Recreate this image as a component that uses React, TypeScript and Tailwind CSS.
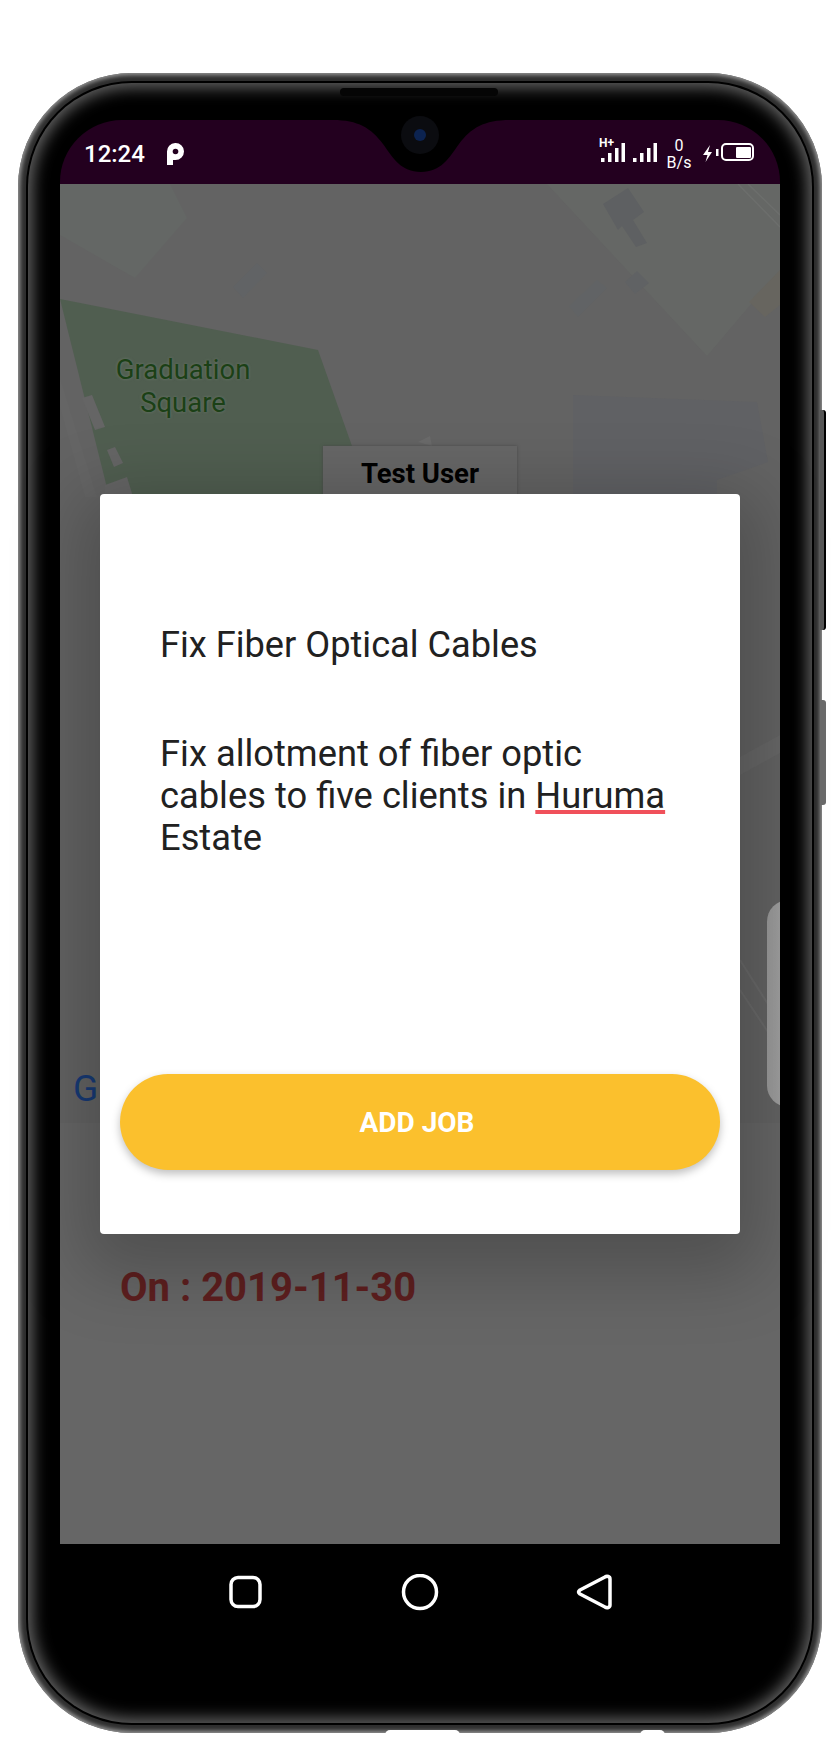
import React from 'react';

const roboto = { fontFamily: 'Roboto, sans-serif' };

function SignalBars() {
  return (
    <svg width="24" height="20" viewBox="0 0 24 20" fill="#fff">
      <rect x="0" y="15" width="3.5" height="4" />
      <rect x="7" y="10" width="3.5" height="9" />
      <rect x="14" y="5" width="3.5" height="14" />
      <rect x="20.5" y="0" width="3.5" height="19" />
    </svg>
  );
}

function StatusBar() {
  return (
    <div className="relative h-[64px] shrink-0 rounded-t-[62px] bg-[#23001f] text-white font-['Roboto',sans-serif]">
      {/* notch */}
      <svg className="absolute left-[273px] top-0" width="177" height="54" viewBox="0 0 177 54">
        <path d="M0 0 C25 0 38 8 50 24 C60 38 68 52 88 52 C108 52 116 38 126 24 C138 8 151 0 177 0 Z" fill="#000" />
      </svg>
      <div className="absolute left-[24px] top-0 flex h-[64px] items-center gap-[21px] pt-[4px]">
        <span className="text-[24px] leading-none font-medium">12:24</span>
        <svg width="19" height="22" viewBox="0 0 19 22">
          <path d="M1 22 V9 A8.5 8.5 0 1 1 9.5 17 H7 V22 Z" fill="#fff" />
          <circle cx="9.5" cy="8.5" r="2.8" fill="#23001f" />
        </svg>
      </div>
      <div className="absolute left-[541px] top-[17px] flex items-start">
        <div className="relative w-[24px]">
          <span className="absolute left-[-2px] top-[0px] text-[12px] leading-none font-bold">H+</span>
          <div className="pt-[6px]">
            <SignalBars />
          </div>
        </div>
        <div className="ml-[8px] pt-[6px]">
          <SignalBars />
        </div>
        <div className="ml-[8px] flex w-[28px] flex-col items-center text-[16px] leading-[17px] font-normal">
          <span>0</span>
          <span>B/s</span>
        </div>
        <svg className="ml-[9px] mt-[8px]" width="18" height="18" viewBox="0 0 18 18" fill="#fff">
          <path d="M8 0 L1 10 H5.5 L3.5 17 L10 7 H6 Z" />
          <rect x="14" y="4" width="2.5" height="7" />
        </svg>
        <div className="ml-[1px] mt-[6px] flex h-[18px] w-[33px] justify-end rounded-[5px] border-2 border-white p-[1.5px]">
          <div className="h-full w-[15px] rounded-[1px] bg-white" />
        </div>
      </div>
    </div>
  );
}

function MapLayer() {
  return (
    <div className="relative h-[939px] overflow-hidden bg-[#636363]">
      <svg className="h-full w-full" viewBox="60 184 720 939" fill="none">
        <path d="M60 184 H170 L187 218 L135 278 L60 235 Z" fill="#646765" />
        <path d="M547 184 H780 V270 L707 356 Z" fill="#656765" />
        <path d="M603 204 L628 188 L644 212 L633 220 L647 243 L636 247 L622 226 L618 230 Z" fill="#5e6062" />
        <path d="M625 282 L637 271 L649 283 L635 294 Z" fill="#606264" />
        <path d="M569 306 L597 280 L607 288 L578 317 Z" fill="#616365" />
        <path d="M749 302 L780 270 V305 L765 317 Z" fill="#67655f" />
        <path d="M738 184 L780 227 M748 184 L780 215" stroke="#6c6e6c" strokeWidth="1.5" />
        <path d="M233 287 L257 263 L267 273 L243 298 Z" fill="#616365" />
        <path d="M573 395 L757 402 L768 462 L717 480 V520 H573 Z" fill="#606164" />
        <path d="M60 299 L318 350 L352 446 L360 520 H115 Z" fill="#505e50" />
        <path d="M60 378 L97 497 H85 L60 407 Z" fill="#656565" />
        <path d="M82 398 L92 395 L105 427 L95 430 Z" fill="#656565" />
        <path d="M107 450 L115 447 L123 463 L114 467 Z" fill="#656565" />
        <path d="M105 485 L127 477 L134 500 H105 Z" fill="#656565" />
        <path d="M418 442 L430 436 L432 446 Z" fill="#6a6a6a" />
        <path d="M740 757 L780 735 V753 L740 775 Z" fill="#676767" />
        <path d="M740 960 L780 1023 M740 990 L780 1050" stroke="#6a6a6a" strokeWidth="2" />
      </svg>

      <div className="absolute left-[43px] top-[169px] w-[160px] text-center text-[27.5px] leading-[33px] text-[#1b4016] [text-shadow:0_0_3px_#6d7a6d]" style={roboto}>
        Graduation
        <br />
        Square
      </div>

      {/* marker label */}
      <div className="absolute left-[263px] top-[262px] h-[60px] w-[194px] bg-[#666] pt-[12px] text-center text-[27.5px] leading-[32px] font-bold text-black shadow-[0_0_3px_#4a4a4a]" style={roboto}>
        Test User
      </div>

      <div className="absolute left-[13px] top-[886px] text-[37px] leading-[37px] text-[#173a75]" style={roboto}>
        G
      </div>

      {/* pull handle, runs off the right edge */}
      <div className="absolute right-[-30px] top-[716px] h-[207px] w-[43px] rounded-[26px] bg-gradient-to-r from-[#9a9a9a] to-[#ababab]" />
    </div>
  );
}

function JobDialog() {
  return (
    <div className="absolute inset-0 flex items-start justify-center pt-[310px]">
      <div className="flex h-[740px] w-[640px] flex-col rounded-[4px] bg-white px-[20px] shadow-[0_20px_70px_20px_rgba(0,0,0,0.22)]" style={roboto}>
        <div className="flex-1 px-[34px] pt-[130px] text-[#212121]">
          <p className="pl-[6px] text-[36.2px] leading-[42px]">Fix Fiber Optical Cables</p>
          <p className="mt-[67px] pl-[6px] text-[36.3px] leading-[42.2px]">
            Fix allotment of fiber optic cables to five clients in{' '}
            <span className="underline decoration-[#f0505a] decoration-[4px] underline-offset-[2px] [text-decoration-skip-ink:none]">Huruma</span> Estate
          </p>
        </div>
        <button className="mb-[64px] h-[96px] w-full rounded-[48px] bg-[#fbc02d] pr-[6px] pt-[2px] text-[28px] font-bold text-white shadow-[0_4px_8px_rgba(0,0,0,0.25)]">
          ADD JOB
        </button>
      </div>
    </div>
  );
}

function NavBar() {
  return (
    <div className="flex flex-1 items-start justify-center pt-[30px]">
      <svg width="400" height="38" viewBox="0 0 400 38" fill="none" stroke="#fff" strokeWidth="3.5" strokeLinejoin="round">
        <rect x="11" y="3.5" width="29" height="29" rx="7" />
        <circle cx="200" cy="18" r="16.5" />
        <path d="M385 3 C387 1.5 390 2.5 390 5 V31 C390 33.5 387 34.5 385 33 L360 20 C358 18.5 358 17.5 360 16 Z" />
      </svg>
    </div>
  );
}

export default function App() {
  return (
    <div className="relative h-[1760px] w-[840px] overflow-hidden bg-white pl-[18px] pt-[73px]">
      {/* side keys */}
      <div className="absolute left-[820px] top-[410px] h-[220px] w-[6px] rounded-r-[3px] border-r-2 border-black bg-[#555]" />
      <div className="absolute left-[820px] top-[700px] h-[105px] w-[6px] rounded-r-[3px] bg-[#6a6a6a]" />
      {/* bottom port bumps */}
      <div className="absolute left-[385px] top-[1730px] h-[5px] w-[75px] rounded-t-[6px] bg-white" />
      <div className="absolute left-[640px] top-[1730px] h-[5px] w-[25px] rounded-t-full bg-white" />

      {/* phone shell: outer metal edge, black line, then the soft inner bevel */}
      <div className="h-[1660px] w-[804px] rounded-[114px] bg-[#2e2e2e] p-[8px] shadow-[inset_0_0_4px_2px_#9a9a9a]">
        <div className="h-full w-full rounded-[106px] bg-black p-[2px]">
          <div className="h-full w-full rounded-[104px] bg-black px-[32px] pt-[37px] shadow-[inset_0_0_16px_4px_#6a6a6a]">
            <div className="relative flex h-full flex-col">
              {/* speaker */}
              <div className="absolute left-[280px] top-[-32px] h-[8px] w-[158px] rounded-full bg-[#050505]" />
              <StatusBar />
              <div className="relative h-[1360px] shrink-0 bg-[#666]">
                <MapLayer />
                <div className="absolute left-[60px] top-[1082px] text-[40px] leading-[44px] font-bold text-[#5e1f1f]" style={roboto}>
                  On : 2019-11-30
                </div>
                <JobDialog />
              </div>
              <NavBar />
              {/* camera */}
              <div className="absolute left-[341px] top-[-4px] flex h-[38px] w-[38px] items-center justify-center rounded-full bg-[#0b0c10]">
                <div className="h-[12px] w-[12px] rounded-full bg-[#0c2350]" />
              </div>
            </div>
          </div>
        </div>
      </div>
    </div>
  );
}
